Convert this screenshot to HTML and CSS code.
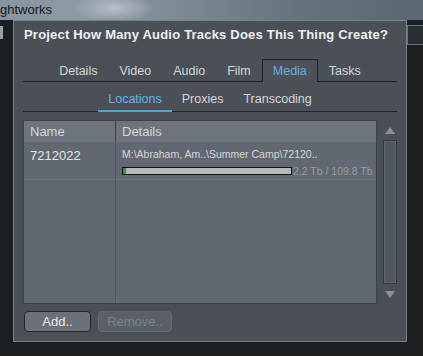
FILE: index.html
```html
<!DOCTYPE html>
<html lang="en">
<head>
    <meta charset="UTF-8">
    <meta name="viewport" content="width=device-width, initial-scale=1.0">
    <title>Project Media</title>
    <link rel="stylesheet" href="styles.css">
</head>
<body>
    <div class="topbar"><span class="app-name">ghtworks</span></div>

    <div class="stage">
        <div class="gutter-left"><div class="stub"></div></div>

        <div class="dialog">
            <div class="title">Project How Many Audio Tracks Does This Thing Create?</div>

            <div class="tabs">
                <div class="tab">Details</div>
                <div class="tab">Video</div>
                <div class="tab">Audio</div>
                <div class="tab">Film</div>
                <div class="tab active">Media</div>
                <div class="tab">Tasks</div>
            </div>

            <div class="subtabs">
                <div class="subtab active">Locations</div>
                <div class="subtab">Proxies</div>
                <div class="subtab">Transcoding</div>
            </div>

            <div class="content">
                <div class="table">
                    <div class="cell head first">Name</div>
                    <div class="cell head">Details</div>

                    <div class="cell row first name">7212022</div>
                    <div class="cell row details">
                        <div class="path">M:\Abraham, Am..\Summer Camp\72120..</div>
                        <div class="usage">
                            <div class="bar"><div class="bar-fill"></div></div>
                            <span class="size">2.2 Tb / 109.8 Tb</span>
                        </div>
                    </div>

                    <div class="cell filler first"></div>
                    <div class="cell filler"></div>
                </div>

                <div class="scrollbar">
                    <div class="arrow"><span class="tri up"></span></div>
                    <div class="track"></div>
                    <div class="arrow"><span class="tri down"></span></div>
                </div>
            </div>

            <div class="buttons">
                <button class="btn">Add..</button>
                <button class="btn" disabled>Remove..</button>
            </div>
        </div>

        <div class="gutter-right"><div class="field"></div></div>
    </div>
</body>
</html>
```

FILE: styles.css
```css
body {
    margin: 0;
    width: 423px;
    height: 356px;
    overflow: hidden;
    background-color: #1c1f22;
    font-family: "Liberation Sans", Arial, sans-serif;
    font-size: 13px;
}
.topbar {
    height: 20px;
    background:
        radial-gradient(ellipse 40px 14px at 115px 8px, rgba(200, 210, 216, 0.7), rgba(200, 210, 216, 0)),
        linear-gradient(90deg, #8793a0 0%, #8e9aa5 20%, #7b8793 45%, #66727e 70%, #5b6773 100%);
}
.app-name {
    display: block;
    line-height: 20px;
    color: #15181b;
    font-size: 13px;
}
.stage {
    display: flex;
    height: 322px;
}
.gutter-left {
    width: 13px;
    padding-top: 6px;
}
.stub {
    width: 3px;
    height: 13px;
    background-color: #9ba0a5;
}
.gutter-right {
    flex: 1;
    padding-top: 5px;
}
.field {
    height: 18px;
    background-color: #2b2f34;
    border: 1px solid #6b7178;
    border-right: none;
}
.dialog {
    width: 392px;
    display: flex;
    flex-direction: column;
    background-color: #4b5057;
    border: 1px solid #7a8086;
}
.title {
    height: 28px;
    line-height: 28px;
    padding-left: 10px;
    color: #eef0f2;
    font-weight: bold;
    font-size: 13px;
    letter-spacing: 0.2px;
    white-space: nowrap;
}
.tabs {
    display: flex;
    justify-content: center;
    margin: 10px 9px 0;
    border-bottom: 1px solid #1f2226;
}
.tab {
    padding: 0 10px;
    height: 22px;
    line-height: 22px;
    font-size: 12.5px;
    color: #d2d5d8;
    border: 1px solid transparent;
    border-bottom: none;
    margin-bottom: -1px;
}
.tab.active {
    color: #5fb3e4;
    border-color: #1f2226;
    background-color: #4d525a;
}
.subtabs {
    display: flex;
    justify-content: center;
    margin: 6px 9px 0;
    border-bottom: 1px solid #1f2226;
}
.subtab {
    padding: 0 10px;
    height: 22px;
    line-height: 22px;
    font-size: 12.5px;
    color: #d2d5d8;
    border-bottom: 2px solid transparent;
    margin-bottom: -1px;
}
.subtab.active {
    color: #5fb3e4;
    border-bottom-color: #4aa6dc;
}
.content {
    display: flex;
    gap: 6px;
    margin: 8px 9px 0;
    height: 184px;
}
.table {
    flex: 1;
    display: grid;
    grid-template-columns: 92px 1fr;
    grid-template-rows: 21px 38px 1fr;
    border: 1px solid #3d4248;
    background-color: #626870;
}
.cell.first {
    border-right: 1px solid #50565d;
}
.cell.head {
    background-color: #6d747c;
    color: #d3d6d9;
    line-height: 21px;
    padding-left: 6px;
}
.cell.head.first {
    border-right-color: #3d4248;
}
.cell.row {
    border-bottom: 1px solid #6f767d;
}
.name {
    padding: 6px 0 0 6px;
    color: #e2e4e6;
}
.details {
    padding: 6px 0 0 6px;
}
.path {
    font-size: 10.5px;
    color: #d4d6d8;
    line-height: 13px;
    white-space: nowrap;
}
.usage {
    display: flex;
    align-items: center;
    margin-top: 4px;
}
.bar {
    width: 168px;
    height: 6px;
    border: 1px solid #101214;
    background-color: #b4b9b2;
}
.bar-fill {
    width: 3px;
    height: 100%;
    background-color: #2f9a3f;
}
.size {
    margin-left: 1px;
    font-size: 10.5px;
    color: #979da3;
    white-space: nowrap;
}
.scrollbar {
    width: 14px;
    display: flex;
    flex-direction: column;
}
.arrow {
    height: 20px;
    display: flex;
    align-items: center;
    justify-content: center;
}
.tri {
    width: 0;
    height: 0;
    border-left: 5px solid transparent;
    border-right: 5px solid transparent;
}
.tri.up {
    border-bottom: 7px solid #8a9097;
}
.tri.down {
    border-top: 7px solid #8a9097;
}
.track {
    flex: 1;
    background-color: #50565d;
    border: 1px solid #33383e;
    box-shadow: inset 0 0 0 1px #5d636a;
}
.buttons {
    display: flex;
    gap: 7px;
    margin: 7px 0 0 10px;
}
.btn {
    height: 21px;
    padding: 0;
    font-family: "Liberation Sans", Arial, sans-serif;
    font-size: 13px;
    color: #e8eaec;
    background-color: #6a7178;
    border: 1px solid #24272b;
    border-radius: 4px;
}
.btn:first-child {
    width: 67px;
}
.btn:disabled {
    width: 74px;
    color: #7d838a;
    background-color: #596067;
    border-color: #636970;
}
```
